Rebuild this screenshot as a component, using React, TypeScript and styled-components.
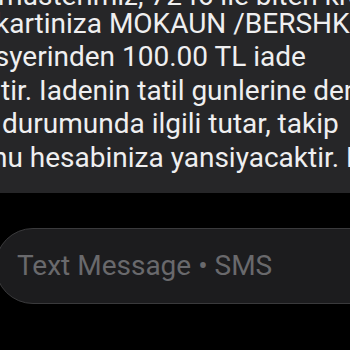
import React from "react";
import styled, { createGlobalStyle } from "styled-components";

const Global = createGlobalStyle`
  html, body { margin: 0; padding: 0; background: #000; }
  #root { width: 350px; height: 350px; overflow: hidden; }
`;

const Screen = styled.div`
  width: 350px;
  height: 350px;
  overflow: hidden;
  background: #000;
  display: flex;
  flex-direction: column;
  font-family: Roboto, "Noto Sans", sans-serif;
`;

const Bubble = styled.div`
  margin-top: -13.8px;
  background: #262628;
  padding: 0 0 19px 0;
  color: #efeff0;
  font-size: 28px;
  display: flex;
  flex-direction: column;
  flex-shrink: 0;
`;

const Line = styled.div<{ $shift: number; $lh?: number }>`
  white-space: nowrap;
  line-height: ${(p) => p.$lh ?? 33.5}px;
  margin-left: ${(p) => p.$shift}px;
`;

const Composer = styled.div`
  margin-top: 35px;
  margin-left: -5px;
  width: 420px;
  height: 76px;
  flex-shrink: 0;
  box-sizing: border-box;
  border: 1.5px solid #3a3a3c;
  border-radius: 38px;
  background: #1c1c1e;
  display: flex;
  align-items: center;
  padding-left: 21px;
`;

const Placeholder = styled.span`
  color: #69696c;
  font-size: 28px;
  line-height: 33.5px;
  white-space: nowrap;
`;

export default function App() {
  return (
    <>
      <Global />
      <Screen>
        <Bubble>
          <Line $shift={-2} $lh={20.5}>musterimiz, 7246 ile biten kredi</Line>
          <Line $shift={-5}>kartiniza MOKAUN /BERSHKA</Line>
          <Line $shift={-12}>isyerinden 100.00 TL iade</Line>
          <Line $shift={1}>tir. Iadenin tatil gunlerine denk</Line>
          <Line $shift={-11.7}>i durumunda ilgili tutar, takip</Line>
          <Line $shift={-8}>nu hesabiniza yansiyacaktir. Bilgi</Line>
        </Bubble>
        <Composer>
          <Placeholder>Text Message • SMS</Placeholder>
        </Composer>
      </Screen>
    </>
  );
}
